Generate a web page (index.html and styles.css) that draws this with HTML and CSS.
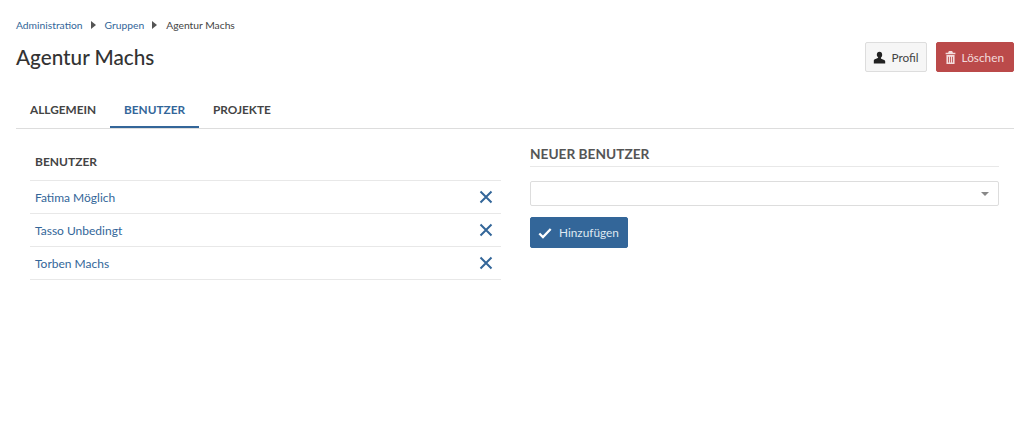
FILE: index.html
```html
<!DOCTYPE html>
<html lang="de">
<head>
    <meta charset="UTF-8">
    <meta name="viewport" content="width=device-width, initial-scale=1.0">
    <title>Agentur Machs</title>
    <link rel="stylesheet" href="styles.css">
</head>
<body>
    <nav class="breadcrumb">
        <a href="#">Administration</a>
        <span class="crumb-sep"></span>
        <a href="#">Gruppen</a>
        <span class="crumb-sep"></span>
        <span>Agentur Machs</span>
    </nav>

    <div class="page-header">
        <h1>Agentur Machs</h1>
        <div class="actions">
            <button class="btn btn-default" type="button">
                <svg class="btn-icon" viewBox="0 0 16 16"><path fill="#222" d="M8 1c2.100 0 3.300 1.500 3.300 3.500 0 1.500-.6 2.800-1.400 3.600-.4.4-.3 1.100.2 1.400l3.600 1.500c1 .4 1.300 1 1.300 2v2.500H1V12c0-1 .3-1.600 1.300-2l3.600-1.500c.5-.3.6-1 .2-1.400C5.300 7.300 4.700 6 4.700 4.500 4.700 2.500 5.900 1 8 1z"/></svg>
                Profil
            </button>
            <button class="btn btn-danger" type="button">
                <svg class="btn-icon" viewBox="0 0 16 16"><path fill="#f3dcdc" fill-rule="evenodd" d="M6 0h4l1 2h3v2H2V2h3zM3 5h10v11H3zm2 2v7h1V7zm2.500 0v7h1V7zM10 7v7h1V7z"/></svg>
                Löschen
            </button>
        </div>
    </div>

    <ul class="tabs">
        <li><a href="#">Allgemein</a></li>
        <li class="active"><a href="#">Benutzer</a></li>
        <li><a href="#">Projekte</a></li>
    </ul>

    <div class="columns">
        <section class="col-list">
            <div class="list-head">Benutzer</div>
            <div class="list-row">
                <a href="#">Fatima Möglich</a>
                <svg class="remove" viewBox="0 0 14 14"><path d="M1.500 1.500l11 11M12.500 1.500l-11 11"/></svg>
            </div>
            <div class="list-row">
                <a href="#">Tasso Unbedingt</a>
                <svg class="remove" viewBox="0 0 14 14"><path d="M1.500 1.500l11 11M12.500 1.500l-11 11"/></svg>
            </div>
            <div class="list-row">
                <a href="#">Torben Machs</a>
                <svg class="remove" viewBox="0 0 14 14"><path d="M1.500 1.500l11 11M12.500 1.500l-11 11"/></svg>
            </div>
        </section>

        <section class="col-form">
            <h2>Neuer Benutzer</h2>
            <div class="select"><span class="caret"></span></div>
            <button class="btn btn-primary" type="button">
                <svg class="btn-icon" viewBox="0 0 16 16"><path fill="none" stroke="#fff" stroke-width="2.600" d="M1.500 8.500l4.200 4.200L14.500 3.500"/></svg>
                Hinzufügen
            </button>
        </section>
    </div>
</body>
</html>
```
FILE: styles.css
```css
body {
    font-family: Lato, sans-serif;
    font-size: 12px;
    color: #444;
    margin: 0;
    padding: 0 10px 0 16px;
    background: white;
}
a {
    color: #336699;
    text-decoration: none;
}
.breadcrumb {
    display: flex;
    align-items: center;
    height: 18px;
    padding-top: 16px;
    font-size: 10.300px;
}
.crumb-sep {
    width: 0;
    height: 0;
    margin: 0 9px 0 8px;
    border-left: 5px solid #555;
    border-top: 4px solid transparent;
    border-bottom: 4px solid transparent;
}
.page-header {
    display: flex;
    justify-content: space-between;
    align-items: center;
    margin-top: 8px;
    height: 30px;
}
h1 {
    margin: 0;
    font-size: 20.700px;
    font-weight: 500;
    color: #333;
}
.actions {
    display: flex;
    gap: 9px;
}
.btn {
    display: flex;
    align-items: center;
    gap: 5px;
    height: 30px;
    padding: 0 7px;
    border: 1px solid #ddd;
    border-radius: 2px;
    font-family: inherit;
    font-size: 11.800px;
}
.btn-icon {
    width: 13px;
    height: 13px;
}
.btn-default {
    background: #f6f6f6;
    color: #444;
}
.btn-danger {
    background: #bb4a4a;
    border-color: #bb4a4a;
    color: #f3dcdc;
    padding-right: 9px;
}
.btn-primary {
    background: #336699;
    border-color: #336699;
    color: #dfe8f1;
    height: 31px;
    gap: 7px;
    padding-right: 8px;
}
.btn-primary .btn-icon {
    width: 14px;
    height: 14px;
}
.tabs {
    display: flex;
    list-style: none;
    margin: 20px 0 0;
    padding: 0;
    height: 36px;
    border-bottom: 1px solid #ddd;
}
.tabs a {
    display: block;
    height: 34px;
    padding: 0 14px;
    line-height: 36px;
    font-size: 11.800px;
    font-weight: 700;
    text-transform: uppercase;
    color: #444;
}
.tabs .active a {
    color: #336699;
    border-bottom: 2px solid #336699;
}
.columns {
    display: flex;
    gap: 29px;
    padding: 0 15px 0 14px;
}
.col-list {
    width: 471px;
}
.list-head {
    height: 51px;
    line-height: 66px;
    padding-left: 5px;
    font-weight: 700;
    font-size: 12px;
    text-transform: uppercase;
    border-bottom: 1px solid #e8e8e8;
}
.list-row {
    display: flex;
    justify-content: space-between;
    align-items: center;
    height: 32px;
    padding: 0 8px 0 5px;
    border-bottom: 1px solid #e8e8e8;
}
.remove {
    width: 14px;
    height: 14px;
    fill: none;
    stroke: #336699;
    stroke-width: 2;
}
.col-form {
    flex: 1;
    padding-top: 16px;
}
h2 {
    margin: 0;
    height: 21px;
    font-size: 13.700px;
    font-weight: 700;
    text-transform: uppercase;
    color: #555;
    border-bottom: 1px solid #e8e8e8;
}
.select {
    display: flex;
    justify-content: flex-end;
    align-items: center;
    height: 23px;
    margin-top: 14px;
    padding-right: 9px;
    border: 1px solid #ddd;
    border-radius: 2px;
}
.caret {
    width: 0;
    height: 0;
    border-top: 4px solid #888;
    border-left: 4px solid transparent;
    border-right: 4px solid transparent;
}
.col-form .btn-primary {
    margin-top: 11px;
}
```
